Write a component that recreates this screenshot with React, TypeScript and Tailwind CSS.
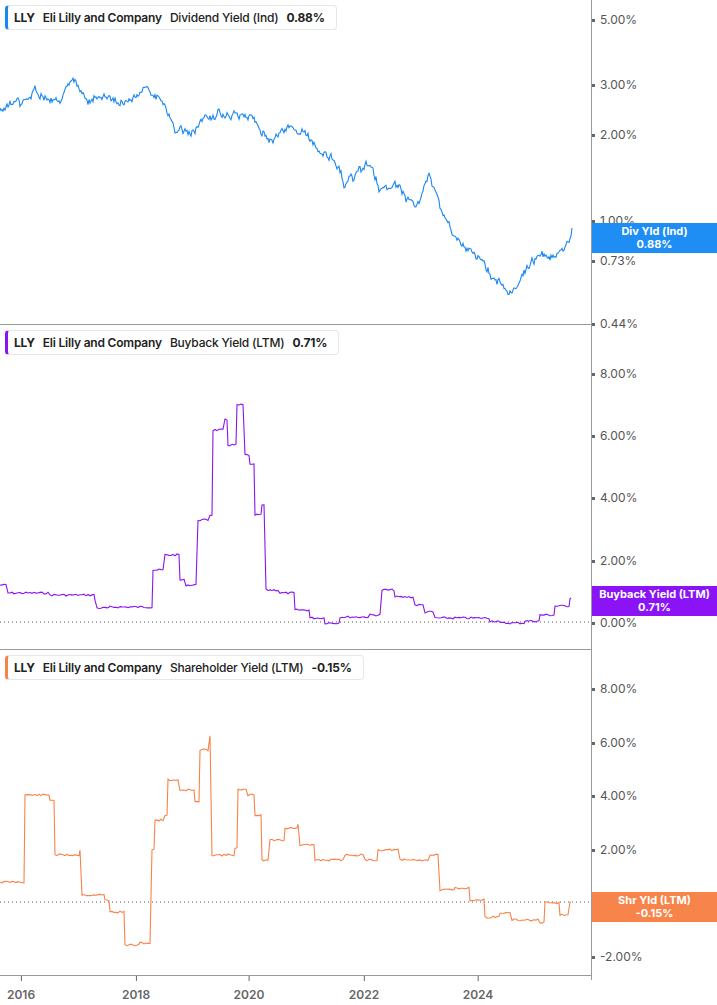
type P = [number, number];

function rand(seed: number) {
  let s = seed;
  return () => {
    s = (s * 9301 + 49297) % 233280;
    return s / 233280;
  };
}

function smooth(keys: P[], amp: number, seed: number) {
  const r = rand(seed);
  const pts: string[] = [];
  let drift = 0;
  for (let i = 0; i < keys.length - 1; i++) {
    const [x0, y0] = keys[i];
    const [x1, y1] = keys[i + 1];
    for (let x = x0; x < x1; x += 1) {
      const t = (x - x0) / (x1 - x0);
      drift = drift * 0.7 + (r() - 0.5) * amp;
      pts.push(`${x},${(y0 + (y1 - y0) * t + drift + (r() - 0.5) * amp * 0.6).toFixed(1)}`);
    }
  }
  const l = keys[keys.length - 1];
  pts.push(`${l[0]},${l[1]}`);
  return pts.join(" ");
}

function steps(keys: P[], amp: number, seed: number) {
  const r = rand(seed);
  const pts: string[] = [];
  for (let i = 0; i < keys.length - 1; i++) {
    const [x0, y0] = keys[i];
    const x1 = keys[i + 1][0];
    for (let x = x0; x < x1; x += 2) pts.push(`${x},${(y0 + (r() - 0.5) * amp).toFixed(1)}`);
  }
  const l = keys[keys.length - 1];
  pts.push(`${l[0]},${l[1]}`);
  return pts.join(" ");
}

const blue: P[] = [[0,110],[10,100],[21,105],[35,90],[48,100],[60,98],[75,83],[88,100],[100,98],[120,105],[135,98],[145,85],[160,100],[175,128],[190,135],[205,118],[230,112],[255,120],[270,140],[285,130],[300,130],[320,150],[335,160],[345,185],[360,170],[370,160],[380,188],[400,185],[415,210],[430,178],[445,220],[460,245],[475,255],[490,270],[500,280],[510,295],[525,270],[540,255],[555,255],[565,250],[570,245],[572,228]];
const purple: P[] = [[0,260],[8,268],[50,270],[95,275],[97,283],[110,282],[152,282],[153,245],[165,230],[180,255],[186,260],[198,195],[210,190],[213,105],[225,95],[228,120],[237,80],[245,130],[250,140],[255,190],[262,180],[266,265],[280,268],[295,285],[310,293],[325,298],[340,292],[370,290],[382,265],[395,272],[415,280],[425,287],[435,293],[490,296],[500,298],[525,296],[540,290],[555,281],[570,273],[571,273]];
const orange: P[] = [[0,232],[25,145],[50,150],[55,205],[80,200],[82,245],[105,250],[110,262],[122,262],[125,295],[140,293],[152,200],[155,170],[165,165],[168,130],[180,140],[195,152],[200,100],[210,85],[212,205],[235,198],[238,140],[248,145],[255,165],[262,210],[270,190],[285,178],[298,175],[300,195],[315,210],[345,205],[365,210],[378,200],[400,210],[430,205],[440,240],[455,238],[470,250],[485,267],[500,263],[512,270],[540,273],[545,253],[560,265],[570,252],[571,252]];

type Tick = { label: string; y: number };

function Panel(props: {
  name: string; metric: string; value: string; color: string; badgeBg: string;
  badge: string; badgeY: number; ticks: Tick[]; points: string; zeroY?: number; h: number; bottom?: boolean;
}) {
  return (
    <div className="flex" style={{ height: props.h }}>
      <div className={`relative w-[591px] ${props.bottom ? "" : "border-b border-[#9a9a9a]"}`}>
        <svg className="absolute inset-0" width="591" height={props.h}>
          {props.zeroY !== undefined && (
            <line x1="0" x2="591" y1={props.zeroY} y2={props.zeroY} stroke="#555" strokeWidth="1" strokeDasharray="1 3" />
          )}
          <polyline points={props.points} fill="none" stroke={props.color} strokeWidth="1.1" />
        </svg>
        <div className="absolute left-[5px] top-[5px] flex h-[25px] items-center gap-[8px] rounded border border-[#e5e7eb] bg-white pl-[6px] pr-[11px] text-[12px] tracking-[-0.2px] text-[#222]" style={{ borderLeft: `3px solid ${props.color}` }}>
          <span className="font-bold">LLY</span>
          <span className="font-semibold">{props.name}</span>
          <span className="font-medium">{props.metric}</span>
          <span className="font-bold">{props.value}</span>
        </div>
      </div>
      <div className="relative flex-1 border-l border-[#9a9a9a] text-[12px] text-[#555]">
        {props.ticks.map((t) => (
          <div key={t.label} className="absolute left-0 flex items-center" style={{ top: t.y - 8 }}>
            <span className="mr-[5px] h-[3px] w-[3px] bg-[#666]" />
            <span>{t.label}</span>
          </div>
        ))}
        <div className={`absolute left-0 right-0 flex h-[30px] flex-col items-center justify-center text-[11px] font-bold leading-[13px] text-white ${props.badgeBg}`} style={{ top: props.badgeY }}>
          <span>{props.badge}</span>
          <span>{props.value}</span>
        </div>
      </div>
    </div>
  );
}

export default function App() {
  const years = [["2016", 21], ["2018", 136], ["2020", 249], ["2022", 364], ["2024", 478]] as const;
  return (
    <div className="h-[1005px] w-[717px] overflow-hidden bg-white" style={{ fontFamily: "Inter, 'Liberation Sans', sans-serif" }}>
      <Panel name="Eli Lilly and Company" metric="Dividend Yield (Ind)" value="0.88%" color="#1a87f0" badgeBg="bg-[#1e8ef5]" badge="Div Yld (Ind)" badgeY={223} h={325}
        points={smooth(blue, 6, 3)}
        ticks={[{ label: "5.00%", y: 19 }, { label: "3.00%", y: 84 }, { label: "2.00%", y: 134 }, { label: "1.00%", y: 220 }, { label: "0.73%", y: 260 }, { label: "0.44%", y: 323 }]} />
      <Panel name="Eli Lilly and Company" metric="Buyback Yield (LTM)" value="0.71%" color="#8a14f0" badgeBg="bg-[#8a14f5]" badge="Buyback Yield (LTM)" badgeY={261} h={325} zeroY={297}
        points={steps(purple, 2, 7)}
        ticks={[{ label: "8.00%", y: 48 }, { label: "6.00%", y: 110 }, { label: "4.00%", y: 172 }, { label: "2.00%", y: 235 }, { label: "0.00%", y: 297 }]} />
      <Panel name="Eli Lilly and Company" metric="Shareholder Yield (LTM)" value="-0.15%" color="#f7834a" badgeBg="bg-[#f7844b]" badge="Shr Yld (LTM)" badgeY={242} h={325} zeroY={252} bottom
        points={steps(orange, 2, 11)}
        ticks={[{ label: "8.00%", y: 38 }, { label: "6.00%", y: 92 }, { label: "4.00%", y: 145 }, { label: "2.00%", y: 199 }, { label: "0.00%", y: 252 }, { label: "-2.00%", y: 306 }]} />
      <div className="flex">
        <div className="relative h-[30px] w-[591px] border-t border-[#9a9a9a]">
          {years.map(([y, x]) => (
            <div key={y} className="absolute top-0 flex -translate-x-1/2 flex-col items-center" style={{ left: x }}>
              <span className="h-[5px] w-px bg-[#666]" />
              <span className="mt-[5px] text-[12px] font-semibold text-[#666]">{y}</span>
            </div>
          ))}
        </div>
        <div className="h-[5px] w-px bg-[#9a9a9a]" />
      </div>
    </div>
  );
}
